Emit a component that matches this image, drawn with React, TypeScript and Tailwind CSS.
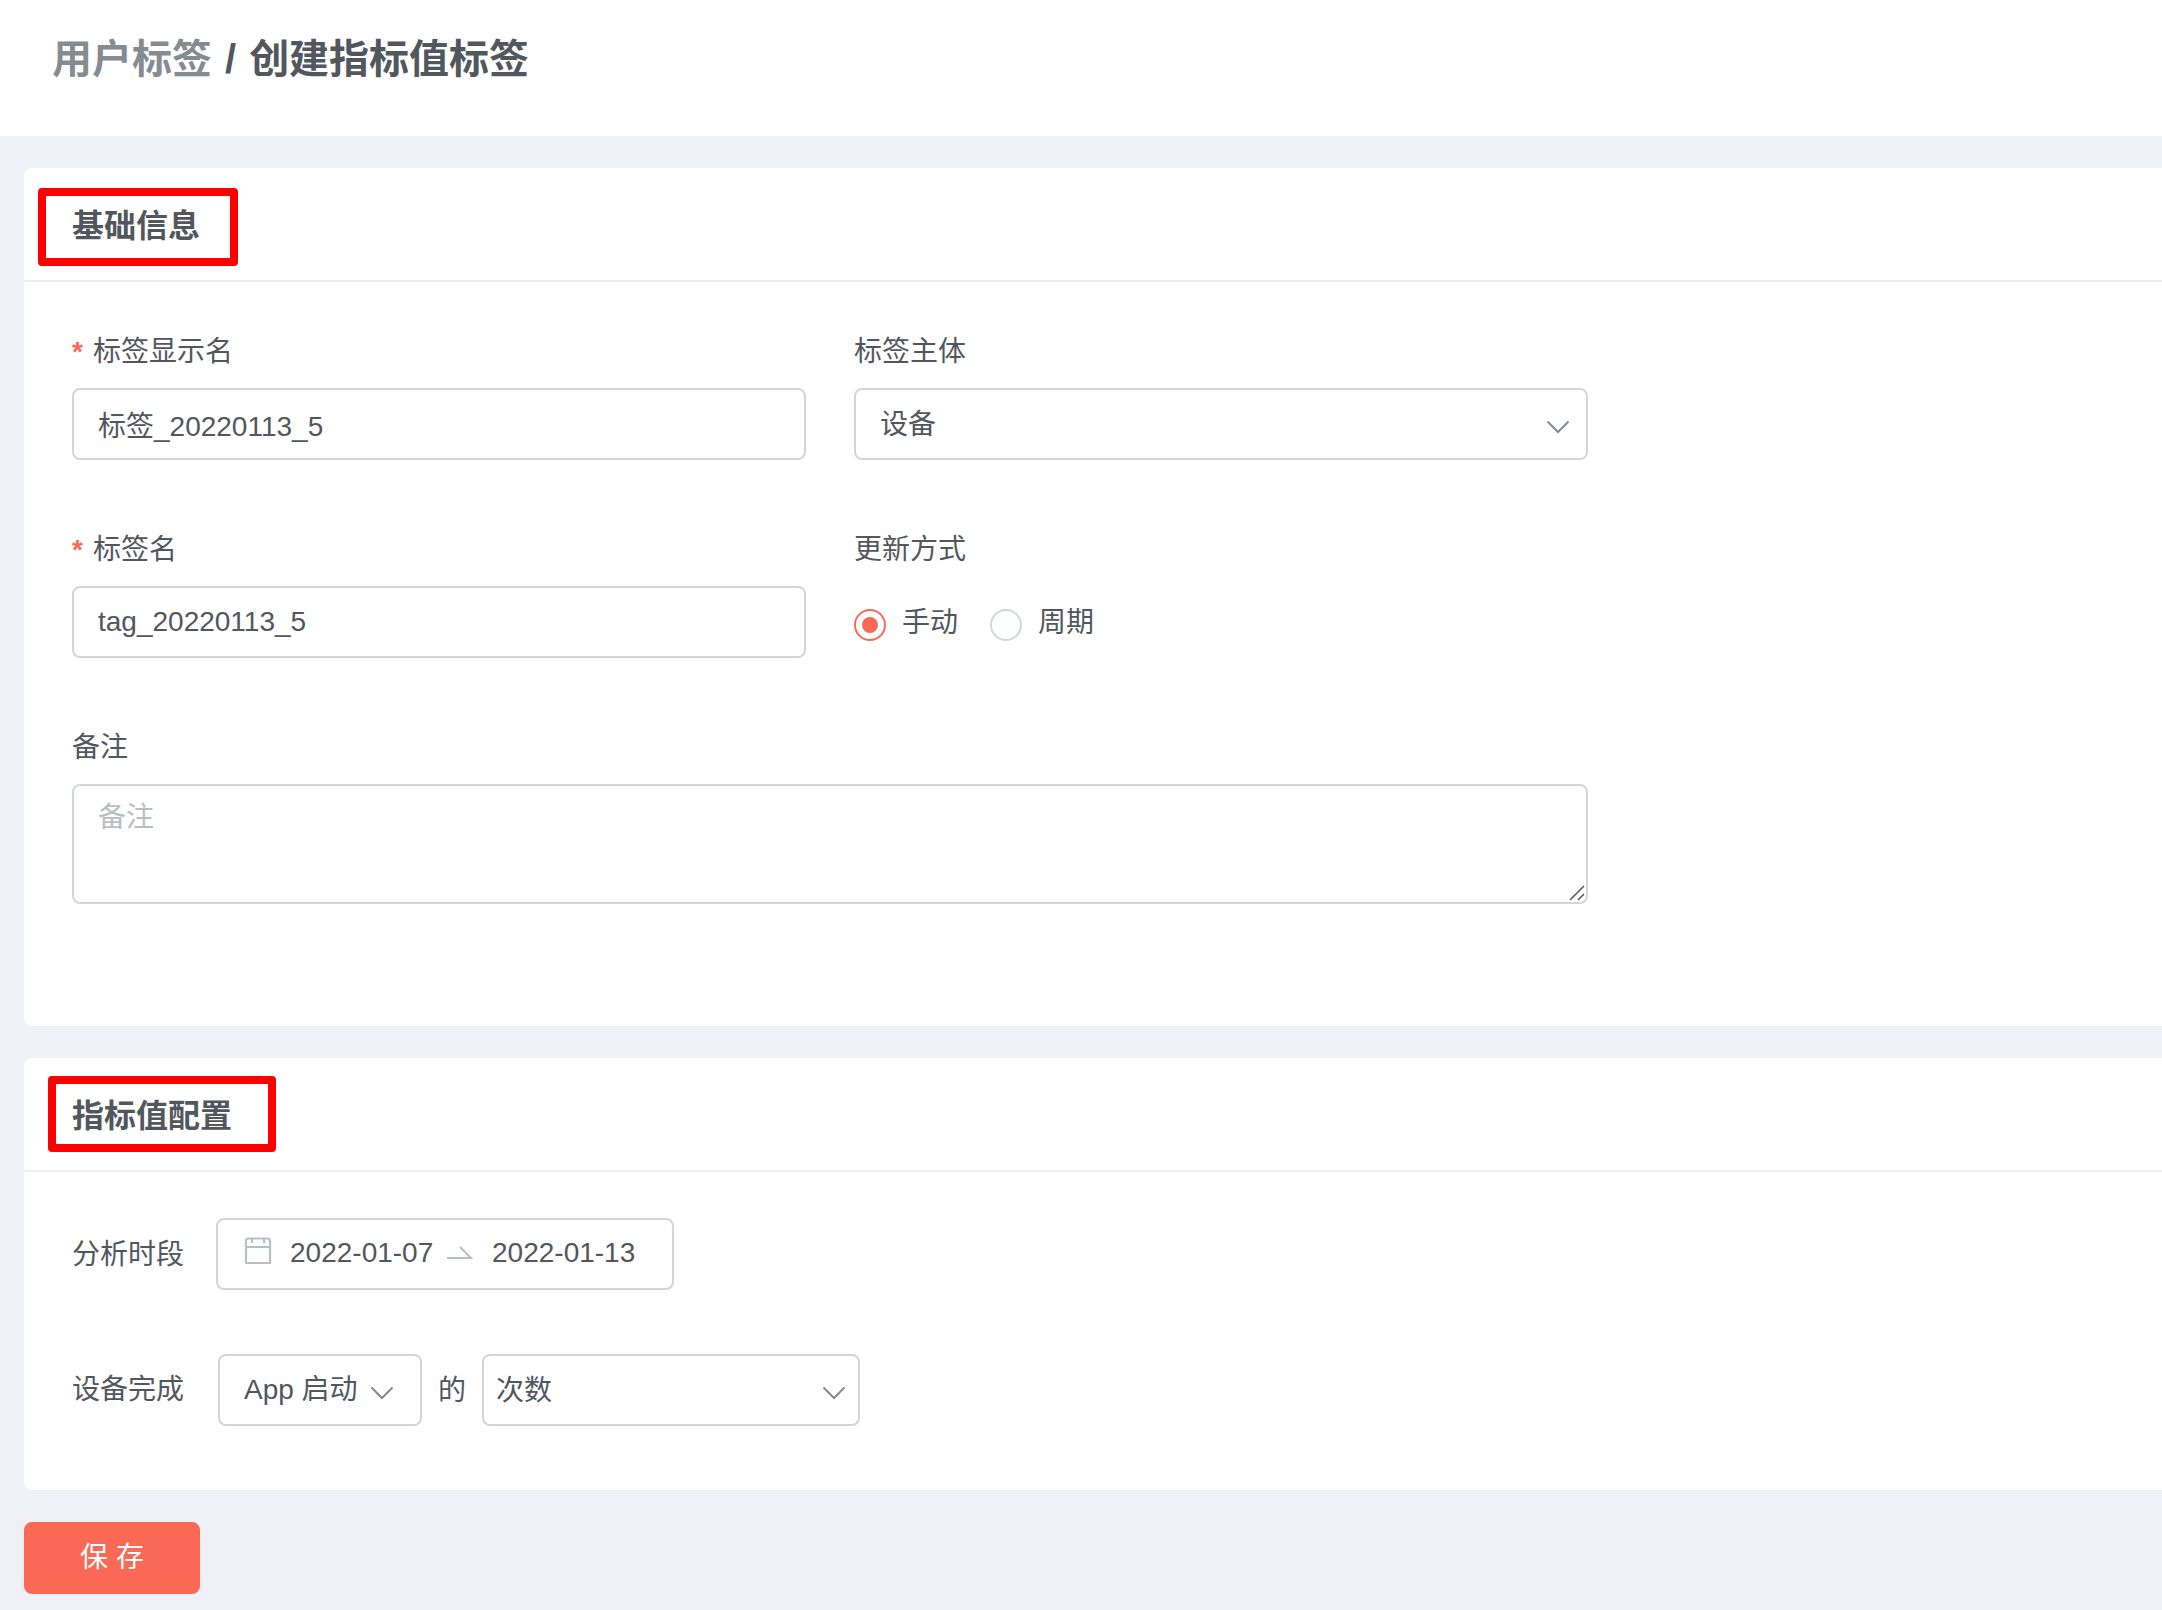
import { useState } from 'react'
import type { ReactNode } from 'react'

const MODES = ['手动', '周期']

function Chevron({ className }: { className: string }) {
  return (
    <svg className={`pointer-events-none absolute ${className}`} width="24" height="14" viewBox="0 0 24 14" fill="none" stroke="#868b92" strokeWidth="2">
      <path d="M1.5 1.5 L12 12 L22.5 1.5" />
    </svg>
  )
}

function CalendarIcon() {
  return (
    <svg className="shrink-0" width="28" height="32" viewBox="0 0 28 32" fill="none" stroke="#b9bec1" strokeWidth="2.2">
      <path d="M2 26 V4 Q2 1.5 4.5 1.5 H23.5 Q26 1.5 26 4 V26 Z" />
      <path d="M2 10 H26 M8 2 V6 M20 2 V6" />
    </svg>
  )
}

function ArrowIcon() {
  return (
    <svg className="shrink-0" width="28" height="16" viewBox="0 0 28 16" fill="none" stroke="#b9bec1" strokeWidth="2">
      <path d="M1 13 H25 L14 2" />
    </svg>
  )
}

function Card({ title, mark, children }: { title: string; mark: string; children: ReactNode }) {
  return (
    <section className="ml-6 rounded-l-lg bg-white">
      <div className="flex h-[114px] items-center border-b-2 border-[#ebefef] pt-1 pl-12">
        <h2 className="relative text-[32px] leading-[48px] font-semibold">
          {title}
          <span className={`absolute rounded-sm border-8 border-[#ff0000] ${mark}`} />
        </h2>
      </div>
      {children}
    </section>
  )
}

function Field({ id, label, required, children }: { id?: string; label: string; required?: boolean; children: ReactNode }) {
  return (
    <div className="flex flex-col gap-3">
      <label htmlFor={id} className="flex gap-2.5 leading-[48px]">
        {required && <span className="font-semibold text-[#fa6856]">*</span>}
        {label}
      </label>
      {children}
    </div>
  )
}

export default function App() {
  const [mode, setMode] = useState('手动')

  return (
    <div className="min-h-screen bg-[#f0f1f6] pb-4 font-['Liberation_Sans','Noto_Sans_CJK_SC',sans-serif] text-[28px] text-[#52575e]">
      <header className="h-[136px] bg-white px-[52px] pt-7">
        <h1 className="flex gap-[13px] text-[40px] leading-[62px] font-semibold">
          <a href="#" className="text-[#868b91]">用户标签</a>
          <span>/</span>
          <span>创建指标值标签</span>
        </h1>
      </header>

      <main className="flex flex-col gap-8 pt-8">
        <Card title="基础信息" mark="-top-3.5 -right-[38px] -bottom-4 -left-[34px]">
          <div className="grid max-w-[1612px] grid-cols-2 gap-x-12 gap-y-[66px] px-12 pt-[46px] pb-[122px]">
            <Field id="display" label="标签显示名" required>
              <input id="display" defaultValue="标签_20220113_5" className="h-[72px] w-full rounded-lg border-2 border-[#d1d6da] px-6" />
            </Field>
            <Field id="subject" label="标签主体">
              <div className="relative">
                <select id="subject" className="block h-[72px] w-full appearance-none rounded-lg border-2 border-[#d1d6da] px-6 pt-0.5">
                  <option>设备</option>
                </select>
                <Chevron className="top-8 right-[18px]" />
              </div>
            </Field>
            <Field id="name" label="标签名" required>
              <input id="name" defaultValue="tag_20220113_5" className="h-[72px] w-full rounded-lg border-2 border-[#d1d6da] px-6" />
            </Field>
            <Field label="更新方式">
              <div className="flex h-[72px] items-center gap-8 pt-0.5">
                {MODES.map(m => (
                  <label key={m} className="flex items-center gap-4">
                    <input
                      type="radio"
                      name="mode"
                      checked={mode === m}
                      onChange={() => setMode(m)}
                      className="mt-1 grid size-8 appearance-none place-items-center rounded-full border-2 border-[#d1d6da] before:size-4 before:rounded-full checked:border-[#fa6856] checked:before:bg-[#fa6856]"
                    />
                    {m}
                  </label>
                ))}
              </div>
            </Field>
            <div className="col-span-2">
              <Field id="remark" label="备注">
                <div className="relative">
                  <textarea id="remark" placeholder="备注" className="block h-[120px] w-full resize-none rounded-lg border-2 border-[#d1d6da] px-6 py-2.5 leading-[44px] placeholder:text-[#b9bec1]" />
                  <svg className="pointer-events-none absolute right-[3px] bottom-[3px]" width="16" height="16" viewBox="0 0 16 16" stroke="#5b5b5b" strokeWidth="1.6">
                    <path d="M1 15 L15 1 M9 15 L15 9" />
                  </svg>
                </div>
              </Field>
            </div>
          </div>
        </Card>

        <Card title="指标值配置" mark="-top-4 -right-11 -bottom-3 -left-6">
          <div className="flex flex-col gap-16 px-12 pt-[46px] pb-16">
            <div className="flex items-center gap-8">
              <label htmlFor="start" className="pt-0.5">分析时段</label>
              <div className="flex h-[72px] w-[458px] items-center rounded-lg border-2 border-[#d1d6da] pb-0.5 pl-[26px]">
                <CalendarIcon />
                <input id="start" defaultValue="2022-01-07" className="ml-[18px] w-[156px]" />
                <ArrowIcon />
                <input aria-label="结束日期" defaultValue="2022-01-13" className="ml-[18px] w-[156px]" />
              </div>
            </div>
            <div className="flex items-center gap-4">
              <label htmlFor="event" className="mr-[18px]">设备完成</label>
              <div className="relative">
                <select id="event" className="block h-[72px] w-[204px] appearance-none rounded-lg border-2 border-[#d1d6da] pl-6">
                  <option>App 启动</option>
                </select>
                <Chevron className="top-8 right-7" />
              </div>
              <label htmlFor="measure" className="pt-0.5">的</label>
              <div className="relative">
                <select id="measure" className="block h-[72px] w-[378px] appearance-none rounded-lg border-2 border-[#d1d6da] pt-0.5 pl-3">
                  <option>次数</option>
                </select>
                <Chevron className="top-8 right-3.5" />
              </div>
            </div>
          </div>
        </Card>

        <button className="ml-6 h-[72px] w-[176px] rounded-lg bg-[#fa6856] text-white">保 存</button>
      </main>
    </div>
  )
}
